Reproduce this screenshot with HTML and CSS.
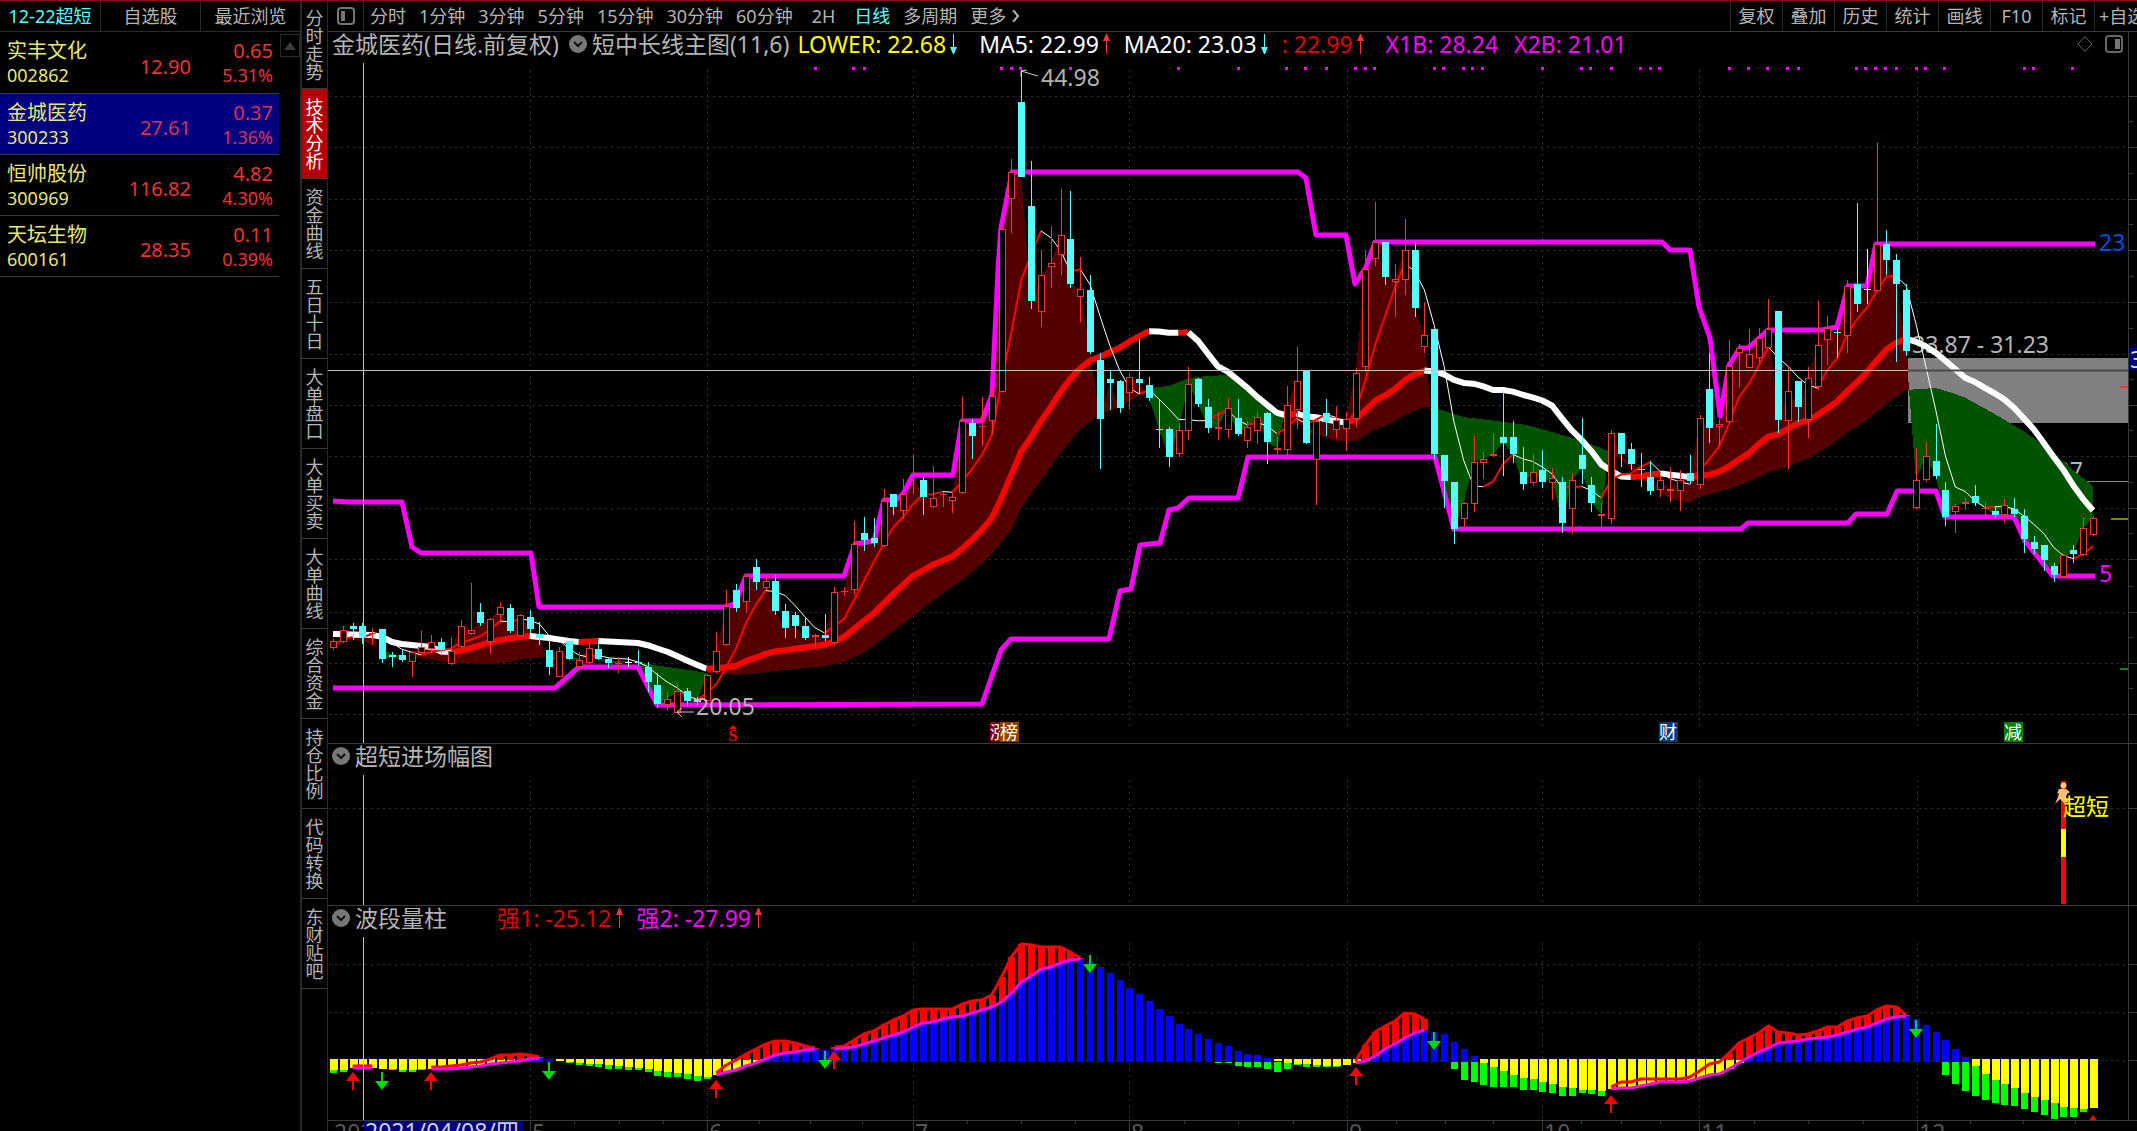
FILE: index.html
```html
<!DOCTYPE html>
<html lang="zh-CN">
<head>
<meta charset="utf-8">
<title>金城医药 日线</title>
<link rel="stylesheet" href="styles.css">
</head>
<body>
<div class="app">
  <aside class="watch">
    <nav class="watch-tabs">
      <button class="on">12-22超短</button><button>自选股</button><button>最近浏览</button>
    </nav>
    <div class="watch-body">
      <table class="stocks">
        <tbody>
          <tr><td class="name">实丰文化<small>002862</small></td><td class="price">12.90</td><td class="chg">0.65<small>5.31%</small></td></tr>
          <tr class="sel"><td class="name">金城医药<small>300233</small></td><td class="price">27.61</td><td class="chg">0.37<small>1.36%</small></td></tr>
          <tr><td class="name">恒帅股份<small>300969</small></td><td class="price">116.82</td><td class="chg">4.82<small>4.30%</small></td></tr>
          <tr><td class="name">天坛生物<small>600161</small></td><td class="price">28.35</td><td class="chg">0.11<small>0.39%</small></td></tr>
        </tbody>
      </table>
      <button class="up" aria-label="向上滚动"><svg width="12" height="8" viewBox="0 0 12 8"><path d="M6 0 12 8H0z" fill="#3c3c3c"/></svg></button>
    </div>
  </aside>

  <nav class="views">
    <button class="first">分时走势</button>
    <button class="on">技术分析</button>
    <button>资金曲线</button>
    <button>五日十日</button>
    <button>大单盘口</button>
    <button>大单买卖</button>
    <button>大单曲线</button>
    <button>综合资金</button>
    <button>持仓比例</button>
    <button>代码转换</button>
    <button>东财贴吧</button>
  </nav>

  <main class="main">
    <div class="toolbar">
      <button class="side" aria-label="侧栏"><svg width="18" height="18" viewBox="0 0 18 18"><rect x="1" y="1" width="16" height="16" rx="3" fill="none" stroke="#777" stroke-width="2"/><rect x="4" y="4" width="4" height="10" fill="#777"/></svg></button>
      <div class="periods">
        <button>分时</button><button>1分钟</button><button>3分钟</button><button>5分钟</button><button>15分钟</button><button>30分钟</button><button>60分钟</button><button class="wide">2H</button><button class="on">日线</button><button>多周期</button><button class="more">更多<svg width="8" height="12" viewBox="0 0 8 12"><path d="M1 0 6 6 1 12" fill="none" stroke="#b4b4b4" stroke-width="2"/></svg></button>
      </div>
      <div class="tools">
        <button>复权</button><button>叠加</button><button>历史</button><button>统计</button><button>画线</button><button>F10</button><button>标记</button><button class="cut">+自选</button>
      </div>
    </div>

    <section class="pane">
      <header class="head">
        <h1>金城医药(日线.前复权)</h1>
        <svg class="fold" width="18" height="18" viewBox="0 0 18 18"><circle cx="9" cy="9" r="9" fill="#777"/><path d="M5 7l4 4 4-4" fill="none" stroke="#111" stroke-width="2"/></svg>
        <span>短中长线主图(11,6)</span>
        <span class="ind yellow">LOWER: 22.68<i class="dn"></i></span>
        <span class="ind white gap">MA5: 22.99<i class="upw"></i></span>
        <span class="ind white">MA20: 23.03<i class="dn"></i></span>
        <span class="ind red">: 22.99<i class="upw"></i></span>
        <span class="ind mag gap">X1B: 28.24</span>
        <span class="ind mag gap">X2B: 21.01</span>
        <svg class="winctl" width="46" height="18" viewBox="0 0 46 18"><path d="M8 1.500l7 7.500-7 7.500-7-7.500z" fill="none" stroke="#666"/><rect x="29" y="1" width="16" height="16" rx="3" fill="none" stroke="#666" stroke-width="2"/><rect x="38" y="4" width="5" height="10" fill="#777"/></svg>
      </header>
      <svg class="plot" id="kline" viewBox="328 62 1809 681" role="img" aria-label="日K线主图"></svg>
    </section>

    <section class="pane">
      <header class="head">
        <svg class="fold" width="18" height="18" viewBox="0 0 18 18"><circle cx="9" cy="9" r="9" fill="#777"/><path d="M5 7l4 4 4-4" fill="none" stroke="#111" stroke-width="2"/></svg>
        <h2>超短进场幅图</h2>
      </header>
      <svg class="plot" id="entry" viewBox="328 774 1809 131" role="img" aria-label="超短进场幅图"></svg>
    </section>

    <section class="pane">
      <header class="head">
        <svg class="fold" width="18" height="18" viewBox="0 0 18 18"><circle cx="9" cy="9" r="9" fill="#777"/><path d="M5 7l4 4 4-4" fill="none" stroke="#111" stroke-width="2"/></svg>
        <h2>波段量柱</h2>
        <span class="ind red far">强1: -25.12<i class="upw"></i></span>
        <span class="ind mag">强2: -27.99<i class="upw"></i></span>
      </header>
      <svg class="plot" id="wave" viewBox="328 936 1809 184" role="img" aria-label="波段量柱"></svg>
    </section>
    <svg class="plot" id="axis" viewBox="328 1121 1809 10" role="img" aria-label="日期轴"></svg>
  </main>
</div>
<script src="chart.js"></script>
</body>
</html>
```
FILE: styles.css
```css
* { box-sizing: border-box; }
html, body { height: 100%; }
body {
  margin: 0;
  background: #000;
  color: #b4b4b4;
  font-family: "Noto Sans", "Noto Sans CJK SC", sans-serif;
  font-size: 18px;
  overflow: hidden;
}
button {
  margin: 0;
  padding: 0;
  border: 0;
  background: none;
  color: inherit;
  font: inherit;
  line-height: 24px;
  white-space: nowrap;
}
h1, h2 { margin: 0; font-size: inherit; font-weight: normal; }
svg { display: block; flex: none; }

.app {
  display: flex;
  height: 100vh;
  border-top: 1px solid #8b0d0d;
  overflow: hidden;
}

/* watch list */
.watch { flex: none; width: 302px; border-right: 2px solid #2a2a2a; }
.watch-tabs { display: grid; grid-template-columns: repeat(3, 1fr); height: 31px; border-bottom: 1px solid #2a2a2a; }
.watch-tabs button + button { border-left: 1px solid #2a2a2a; }
.watch-tabs .on { color: #54ffff; }
.watch-body { display: flex; align-items: flex-start; justify-content: space-between; }
.stocks { width: 279px; border-collapse: collapse; table-layout: fixed; font-size: 20px; line-height: 25px; }
.stocks tr { height: 61px; border-bottom: 1px solid #3a3a3a; }
.stocks td { padding: 2px 6px 0 0; text-align: right; color: #f03232; vertical-align: middle; }
.stocks td.name { width: 110px; padding-left: 7px; text-align: left; color: #e6e67a; }
.stocks td.price { width: 87px; padding-top: 8px; }
.stocks small { display: block; font-size: 18px; }
.stocks .sel { background: #000080; }
.stocks .sel td.price, .stocks .sel td.chg { color: #d83250; }
.up { display: grid; place-items: center; width: 20px; height: 23px; margin-top: 2px; border: 1px solid #2a2a2a; }

/* vertical view tabs */
.views { flex: none; display: flex; flex-direction: column; width: 26px; border-right: 1px solid #2a2a2a; }
.views button {
  width: 25px;
  height: 90px;
  border-bottom: 1px solid #3a3a3a;
  white-space: normal;
  padding: 0 3px;
  line-height: 18px;
  word-break: break-all;
}
.views .first { height: 88px; }
.views .on { background: #b40000; color: #fff; }

/* main column */
.main { flex: 1; min-width: 0; }
.toolbar { display: flex; align-items: stretch; height: 31px; border-bottom: 1px solid #3a3a3a; overflow: hidden; }
.side { display: grid; place-items: center; width: 36px; border-right: 1px solid #2a2a2a; }
.periods { display: flex; gap: 13px; padding-left: 6px; }
.periods .wide { padding: 0 6px; }
.periods .on { color: #54ffff; }
.periods .more { display: flex; align-items: center; gap: 6px; }
.tools { display: flex; margin-left: auto; }
.tools button { width: 52px; border-left: 1px solid #2a2a2a; text-align: center; }
.tools .cut { width: 43px; padding-left: 4px; text-align: left; overflow: hidden; }

.pane { border-bottom: 1px solid #3a3a3a; }
.head {
  display: flex;
  align-items: center;
  gap: 8px;
  height: 30px;
  margin-right: 8px;
  padding: 0 5px 6px 4px;
  border-right: 1px solid #3a3a3a;
  font-size: 23px;
  line-height: 24px;
  white-space: nowrap;
}
.fold + * { margin-left: -3px; }
h1 + .fold { margin-left: 2px; }
.plot { width: 100%; height: auto; overflow: hidden; }
.ind { display: flex; align-items: center; gap: 4px; }
.ind.gap { margin-left: 8px; }
.ind.far { margin-left: 42px; }
.yellow { color: #ff0; }
.white { color: #fff; }
.red { color: #e00000; }
.mag { color: #f0f; }
.ind i { position: relative; width: 7px; height: 20px; margin-right: 6px; }
.ind i::before { content: ""; position: absolute; left: 3px; top: 0; width: 1px; height: 20px; background: currentColor; }
.ind i::after { content: ""; position: absolute; left: 0; border: solid transparent; border-width: 0 3px; width: 1px; }
.ind .dn { color: #54ffff; }
.ind .dn::after { bottom: 0; border-top: 7px solid #54ffff; }
.ind .upw { color: #ff3232; }
.ind .upw::after { top: 0; border-bottom: 7px solid #ff3232; }
.winctl { margin-left: auto; }

/* chart text */
.t { font-family: "Noto Sans", "Noto Sans CJK SC", sans-serif; font-size: 23px; }
.badge { font-size: 18px; fill: #fff; text-anchor: middle; }
```
FILE: chart.js
```js
// Candle rows: type (r rising, c falling, w flat), then y of high, body top, body bottom, low.
const K = `r639,641,648,650 r626,630,642,643 c623,626,629,640 c623,626,637,644 r628,633,634,645 c629,629,659,663 c652,655,657,667 c649,655,660,662 r651,652,662,677 r631,647,653,654
r635,642,649,653 c638,642,650,655 r637,651,664,665 r620,626,647,648 r583,630,634,635 c603,612,623,626 r618,619,642,654 r602,607,615,623 c604,608,631,633 r614,615,636,636
c610,617,629,633 c622,634,638,645 c641,650,667,675 r647,651,677,677 c641,641,659,660 r652,660,667,668 r642,648,663,664 c640,649,659,660 c658,659,663,668 r657,663,664,673
w657,662,662,667 c650,662,663,665 c662,667,682,692 c673,685,704,708 r692,699,705,711 r683,691,713,713 c688,691,701,706 c697,699,702,705 r674,675,701,701 r632,651,672,673
r590,606,645,646 c584,590,608,612 r575,576,602,613 c559,567,582,590 r577,581,588,590 c575,581,611,615 c604,611,628,638 c612,615,626,638 c617,626,638,640 r634,635,637,647
c614,635,638,641 r587,592,643,645 r587,591,591,596 r521,544,590,595 c517,533,540,551 c518,538,543,547 r489,501,546,547 c494,494,507,515 r479,494,511,519 r455,475,476,494
c477,480,497,515 r466,498,507,508 r492,494,495,507 r493,497,501,513 r397,421,493,494 c419,423,436,459 r397,426,426,446 r387,396,421,434 r228,229,392,392 r159,172,199,233
c70,102,177,177 c161,206,301,309 r250,275,312,327 r226,263,267,288 r189,235,255,275 c191,239,284,288 r257,289,297,322 c275,290,352,354 c353,360,419,469 c371,379,383,410
c380,381,408,413 r373,377,393,410 c339,379,383,394 c377,385,398,401 c400,429,429,448 c427,429,457,467 r423,430,454,457 r367,384,431,440 c378,379,404,407 c399,407,428,433
r412,427,429,440 r398,408,430,438 c399,418,434,436 r421,427,441,448 r412,417,431,444 c412,413,442,464 r437,448,450,459 r386,405,450,459 r347,381,410,429 c370,371,443,444
r418,421,460,505 c399,413,422,436 r406,420,430,438 r412,419,429,451 r368,373,419,427 r250,269,367,372 r202,242,259,266 c242,242,277,285 r264,279,282,317 r219,250,280,295
c242,250,308,317 r302,335,347,353 c329,329,454,459 c455,455,481,508 c482,482,529,544 r502,503,519,527 r436,462,504,512 r452,459,463,479 r433,454,456,457 c391,437,443,476
c421,437,454,463 c447,472,484,490 r454,472,483,486 c450,470,482,488 r468,478,483,500 c477,482,523,533 r473,480,509,534 c418,455,469,484 c477,485,503,512 r503,514,516,528
r430,433,519,524 c433,433,454,467 c443,449,464,470 c453,469,469,487 c461,477,491,495 r475,480,490,497 r467,489,491,502 r470,480,491,511 c455,473,481,484 r415,418,485,489
c353,389,428,443 r419,424,427,446 r340,366,422,423 r344,348,353,388 r329,354,368,368 r328,338,358,363 r299,329,348,348 c311,311,420,433 r366,391,421,469 c381,381,407,422
r367,378,420,438 r301,345,387,390 r316,328,340,365 c328,332,333,358 r280,286,336,353 c203,284,304,312 w249,289,290,304 r143,244,291,292 c230,244,260,275 c254,260,284,362
c284,290,351,356 r448,480,508,509 r442,456,480,482 c424,461,476,479 c482,490,517,526 r504,506,512,533 r498,502,504,510 c485,496,503,506 r502,508,508,518 c507,511,515,518
r499,505,515,523 c498,509,514,517 c509,516,539,553 c536,542,549,554 c545,545,560,571 c563,566,575,582 r554,555,577,578 c545,550,554,563 r517,528,555,556 r516,518,535,536`
  .split(/\s+/).map(s => [s[0], ...s.slice(1).split(',').map(Number)]);

const X = i => 333 + 9.832 * i;
const N = K.length;
const close = K.map(k => k[0] === 'c' ? k[3] : k[2]);
const pts = s => s.trim().split(/\s+/).map(p => p.split(',').map(Number));
const at = (line, x) => {
  if (x <= line[0][0]) return line[0][1];
  for (let j = 1; j < line.length; j++) {
    const [x0, y0] = line[j - 1], [x1, y1] = line[j];
    if (x <= x1) return y0 + (y1 - y0) * (x - x0) / (x1 - x0);
  }
  return line[line.length - 1][1];
};
const poly = (p, color, w) =>
  `<polyline points="${p.map(q => q.join()).join(' ')}" fill="none" stroke="${color}" stroke-width="${w}" stroke-linejoin="round"/>`;
const rect = (x, y, w, h, f) => `<rect x="${x}" y="${y}" width="${w}" height="${h}" fill="${f}"/>`;
const line = (x1, y1, x2, y2, c, w = 1, extra = '') =>
  `<line x1="${x1}" y1="${y1}" x2="${x2}" y2="${y2}" stroke="${c}" stroke-width="${w}" ${extra}/>`;
const text = (x, y, c, s, cls = '') => `<text class="t ${cls}" x="${x}" y="${y}" fill="${c}">${s}</text>`;

const GX = [530, 707, 913, 1129, 1347, 1542, 1699, 1917];
const DOT = 'stroke-dasharray="2 4"';
const grid = (ys, y0, y1) =>
  ys.map(y => line(329, y + .5, 2128, y + .5, '#303030', 1, DOT)).join('') +
  GX.map(x => line(x + .5, y0, x + .5, y1, '#303030', 1, DOT)).join('');

/* ---- main chart ---- */
const base = pts(`333,638 362,641 372,645 383,650 395,655 419,658 455,663 491,664 510,662 530,658 545,657 570,658 601,660 638,662 660,666 688,670 707,673 739,675 766,672 796,669 825,666 844,662 865,652 884,638 904,623 913,616 940,595 965,578 990,556 1011,530 1021,508 1041,480 1061,452 1081,428 1098,415 1120,407 1135,398 1150,388 1169,386 1189,378 1208,376 1228,375 1238,380 1258,398 1278,412 1286,417 1297,423 1306,427 1322,437 1336,441 1356,441 1366,435 1375,429 1386,426 1405,415 1424,407 1435,408 1463,417 1497,421 1527,425 1552,432 1582,441 1601,448 1612,453 1621,460 1640,478 1660,492 1670,498 1679,501 1690,502 1699,497 1729,489 1748,482 1768,472 1787,467 1808,458 1828,447 1848,432 1867,420 1887,403 1906,390 1936,388 1962,396 1984,408 2005,420 2025,432 2039,442 2053,453 2064,462 2073,470 2083,478 2094,487`);
const upper = pts(`333,501 348,502 402,502 412,547 421,553 531,553 539,607 725,607 735,604 746,576 844,576 855,544 874,541 884,500 896,500 903,494 913,475 953,475 962,421 982,421 992,395 998,270 1001,228 1012,172 1298,172 1306,178 1316,235 1346,235 1355,284 1366,267 1375,242 1662,242 1670,250 1690,250 1699,307 1710,338 1720,416 1729,365 1740,348 1748,348 1768,330 1822,330 1837,327 1848,286 1867,286 1876,244 2095,244`);
const lower = pts(`333,688 555,688 579,667 638,667 657,705 982,704 1001,650 1011,639 1109,639 1120,591 1131,589 1140,545 1160,543 1169,510 1178,508 1189,498 1238,498 1248,457 1435,457 1454,529 1741,529 1748,523 1848,523 1856,514 1887,514 1897,491 1936,491 1945,517 2014,517 2025,541 2053,576 2095,576`);
const early = pts(`333,634 373,635 383,637 392,642 402,644 432,647 442,652 456,652 471,648 491,642 511,638 530,636 550,638 569,641 579,642 600,641 638,643 647,645 668,652 688,661 707,669 717,670`);

const avg = (i, n) => close.slice(i - n + 1, i + 1).reduce((a, b) => a + b, 0) / n;
const ma5 = close.map((c, i) => i < 4 ? [645, 640, 637, 637][i] : avg(i, 5));
const ma20 = close.map((c, i) => i < 39 ? at(early, X(i)) : avg(i, 20));

const bands = () => {
  const d = { '#540000': '', '#005400': '' };
  for (let i = 2; i < N - 1; i++) {
    const x0 = X(i), x1 = X(i + 1), a0 = close[i], a1 = close[i + 1], b0 = at(base, x0), b1 = at(base, x1);
    const up0 = a0 < b0, up1 = a1 < b1, col = u => u ? '#540000' : '#005400';
    if (up0 === up1) d[col(up0)] += `M${x0} ${a0}L${x1} ${a1}L${x1} ${b1}L${x0} ${b0}z`;
    else {
      const t = (a0 - b0) / ((a0 - b0) - (a1 - b1)), xm = x0 + (x1 - x0) * t, ym = a0 + (a1 - a0) * t;
      d[col(up0)] += `M${x0} ${a0}L${xm} ${ym}L${x0} ${b0}z`;
      d[col(up1)] += `M${x1} ${a1}L${xm} ${ym}L${x1} ${b1}z`;
    }
  }
  return Object.entries(d).map(([c, p]) => `<path d="${p}" fill="${c}" shape-rendering="crispEdges"/>`).join('');
};
// A moving average is red while it rises and white while it falls.
const trend = (m, wUp, wDn) => {
  let out = '', run = [[X(0), m[0]]], up = m[1] < m[0] - .2;
  for (let i = 1; i < N; i++) {
    const u = m[i] < m[i - 1] - .2;
    if (u !== up) { out += poly(run, up ? '#f00' : '#fff', up ? wUp : wDn); run = [run[run.length - 1]]; up = u; }
    run.push([X(i), m[i]]);
  }
  return out + poly(run, up ? '#f00' : '#fff', up ? wUp : wDn);
};
const candles = () => K.map(([t, h, a, b, l], i) => {
  const x = Math.round(X(i)), c = { r: '#ff3232', c: '#54ffff', w: '#fff' }[t];
  const wick = (p, q) => q > p ? rect(x, p, 1, q - p, c) : '';
  if (b - a < 3) return wick(h, l) + rect(x - 3, a, 7, Math.max(1, b - a), c);
  if (t === 'c') return wick(h, l) + rect(x - 3, a, 7, b - a, c);
  return wick(h, a) + wick(b, l) + `<rect x="${x - 2.5}" y="${a + .5}" width="6" height="${b - a - 1}" fill="#000" stroke="${c}"/>`;
}).join('');

const HY = [96, 147, 199, 250, 302, 354, 405, 456, 508, 559, 612, 663, 714];
const marks = [815, 853, 864, 1001, 1011, 1020, 1070, 1178, 1238, 1286, 1305, 1326, 1355, 1365, 1374, 1434, 1443, 1463, 1472, 1482, 1542, 1581, 1590, 1611, 1640, 1650, 1659, 1729, 1748, 1767, 1787, 1798, 1856, 1865, 1875, 1885, 1896, 1916, 1925, 1944, 2024, 2033, 2072];
const badge = (x, c, s) => rect(x, 722, 19, 20, c) + text(x + 9, 739, '#fff', s, 'badge');

document.getElementById('kline').innerHTML =
  grid(HY, 70, 726) +
  rect(1908, 358, 220, 65, '#808080') +
  text(1912, 353, '#b4b4b4', '33.87 - 31.23') +
  text(2024, 479, '#b4b4b4', '28.27') +
  line(2060, 481.5, 2128, 481.5, '#888') +
  bands() +
  poly(upper, '#f0f', 5) + poly(lower, '#f0f', 5) +
  trend(ma20, 6, 6) + trend(ma5, 2, 1) + candles() +
  marks.map(x => rect(x - 1, 67, 3, 3, '#f0f')).join('') +
  line(328, 370.5, 1908, 370.5, '#c0c0c0', 1) + line(1908, 370.5, 2128, 370.5, '#4a4a4a', 2) +
  line(363.5, 63, 363.5, 743, '#c0c0c0', 1) +
  line(2128.5, 62, 2128.5, 743, '#3a3a3a') +
  HY.map((y, j) => line(2129, y + .5, 2137, y + .5, '#3a3a3a') + (j ? line(2129, y - 25.5, 2133, y - 25.5, '#3a3a3a') : '')).join('') +
  text(1041, 86, '#b4b4b4', '44.98') +
  '<path d="M1038 76 1021 71M1021 77v-6l6-1" fill="none" stroke="#ccc"/>' +
  text(696, 715, '#b4b4b4', '20.05') +
  '<path d="M694 712H678M682 708l-5 4 5 5" fill="none" stroke="#ccc"/>' +
  text(2099, 251, '#0050e0', '23') + text(2099, 582, '#f0f', '5') +
  rect(2120, 386, 8, 2, '#ff3232') + rect(2111, 518, 17, 2, '#808000') + rect(2120, 668, 8, 2, '#008040') +
  rect(2129, 348, 8, 22, '#000080') + text(2130, 368, '#ddd', '3') +
  '<path d="M733 725l4 4h-8z" fill="#f00"/><text x="733" y="741" fill="#f00" text-anchor="middle" font-family="Liberation Serif, serif" font-weight="bold" font-size="16">S</text>' +
  badge(990, '#800000', '涨') + badge(1000, '#884400', '榜') + badge(1659, '#003c78', '财') + badge(2004, '#008000', '减');

/* ---- entry signal ---- */
document.getElementById('entry').innerHTML =
  grid([808], 780, 904) +
  line(363.5, 775, 363.5, 905, '#c0c0c0', 1) +
  line(2128.5, 774, 2128.5, 905, '#3a3a3a') + line(2129, 808.5, 2137, 808.5, '#3a3a3a') +
  rect(2061, 781, 5, 123, '#f00') + rect(2061, 829, 5, 28, '#ff0') +
  '<circle cx="2063.500" cy="785.500" r="3" fill="#ffc878"/><path d="M2059 789h7l4 3-3 2-1 3 3 5-5 1-4-4-5 5 3-7 1-4-2 1z" fill="#ffc070"/>' +
  text(2063, 815, '#ff0', '超短');

/* ---- wave histogram: fast and slow line, y per bar ---- */
const A = `1073 1072 1066 1066 1066 1069 1070 1072 1072 1070 1067 1067 1066 1065 1063 1062 1059 1055 1055 1054 1055 1057 1062 1062 1063 1065 1066 1067 1069 1069 1070 1070 1072 1076 1077 1077 1079 1081 1079 1073 1065 1060 1054 1049 1044 1041 1041 1043 1046 1048 1055 1047 1046 1040 1034 1031 1025 1020 1016 1010 1009 1009 1009 1009 1004 1001 1000 995 977 957 944 945 947 947 947 952 958 970 980 990 1000 1008 1016 1024 1032 1040 1046 1052 1057 1061 1063 1063 1066 1067 1067 1069 1072 1069 1065 1067 1067 1067 1067 1065 1061 1045 1032 1026 1021 1013 1014 1019 1040 1055 1069 1080 1082 1085 1087 1087 1087 1090 1090 1092 1093 1096 1096 1093 1094 1096 1087 1082 1082 1079 1079 1079 1079 1079 1077 1071 1064 1062 1053 1043 1038 1033 1026 1032 1033 1035 1034 1031 1027 1027 1021 1018 1016 1010 1006 1007 1015 1030 1045 1060 1075 1084 1091 1096 1100 1103 1105 1106 1109 1112 1115 1119 1117 1117 1112 1106`.split(' ').map(Number);
const B = `1070 1070 1068 1068 1068 1069 1069 1070 1070 1069 1069 1069 1069 1068 1067 1066 1064 1063 1062 1061 1059 1058 1059 1061 1062 1063 1064 1064 1065 1066 1067 1068 1069 1071 1072 1073 1074 1076 1077 1075 1072 1070 1066 1063 1059 1055 1053 1052 1050 1049 1050 1049 1048 1047 1044 1041 1038 1035 1032 1027 1023 1022 1019 1017 1016 1013 1010 1007 1002 993 982 976 969 967 963 960 959 961 967 973 980 988 994 1001 1009 1016 1024 1029 1034 1039 1043 1046 1051 1054 1055 1058 1061 1063 1064 1064 1065 1066 1066 1065 1063 1061 1056 1049 1044 1038 1033 1030 1032 1034 1042 1049 1056 1063 1067 1071 1075 1078 1079 1082 1084 1087 1088 1090 1090 1091 1089 1088 1088 1086 1084 1082 1082 1082 1081 1078 1075 1074 1069 1063 1057 1052 1048 1043 1042 1041 1039 1038 1037 1035 1032 1029 1027 1023 1019 1017 1016 1019 1025 1032 1040 1049 1057 1066 1074 1080 1084 1088 1093 1097 1100 1103 1107 1108 1109 1108`.split(' ').map(Number);
let bars = '', lines = '', run = [];
const flush = () => {
  if (run.length > 1) lines += poly(run.map(i => [X(i), A[i]]), '#f00', 3) + poly(run.map(i => [X(i), B[i]]), '#f0f', 3);
  run = [];
};
for (let i = 0; i < N; i++) {
  const x = Math.round(X(i)) - 3, a = A[i], b = B[i], z = 1060;
  if (a > b && a > z) bars += rect(x, Math.max(b, z + 2), 7, a - Math.max(b, z + 2), '#0f0');
  if (b < z) bars += rect(x, b, 7, z + 2 - b, '#00f');
  else if (b > z) bars += rect(x, z - 1, 8, b - z + 1, '#ff0');
  if (a < b && a < z) bars += rect(x, a, 7, Math.min(b, z) - a, '#f00');
  if (a < b) run.push(i); else flush();
}
flush();
const upArrow = (i, y) => { const x = Math.round(X(i)); return `<path d="M${x} ${y}l7 9h-6v9h-2v-9h-6z" fill="#f00"/>`; };
const dnArrow = (i, y) => { const x = Math.round(X(i)); return `<path d="M${x} ${y + 18}l7-9h-6v-9h-2v9h-6z" fill="#00d800"/>`; };
document.getElementById('wave').innerHTML =
  grid([964, 1012, 1060], 943, 1119) + bars + lines +
  [[2, 1072], [10, 1072], [39, 1080], [51, 1051], [104, 1067], [130, 1095], [179, 1115]].map(p => upArrow(...p)).join('') +
  [[5, 1072], [22, 1062], [50, 1051], [77, 955], [112, 1032], [161, 1020]].map(p => dnArrow(...p)).join('') +
  line(363.5, 937, 363.5, 1120, '#c0c0c0', 1) +
  line(2128.5, 936, 2128.5, 1120, '#3a3a3a') +
  [964, 1012, 1060].map(y => line(2129, y + .5, 2137, y + .5, '#3a3a3a')).join('');

/* ---- date axis ---- */
const months = [[334, '2021'], [532, '5'], [709, '6'], [915, '7'], [1131, '8'], [1349, '9'], [1544, '10'], [1701, '11'], [1919, '12']];
document.getElementById('axis').innerHTML =
  months.map(([x, s]) => text(x, 1141, '#555', s)).join('') +
  GX.map((x, j) => {
    const next = GX[j + 1] || 2128;
    return line(x + .5, 1121, x + .5, 1131, '#3a3a3a') +
      [1, 2, 3].map(k => line(Math.round(x + (next - x) * k / 4) + .5, 1121, Math.round(x + (next - x) * k / 4) + .5, 1124, '#3a3a3a')).join('');
  }).join('') +
  rect(364, 1121, 159, 10, '#000080') + text(365, 1140, '#d0d0d0', '2021/04/08/四');
```
